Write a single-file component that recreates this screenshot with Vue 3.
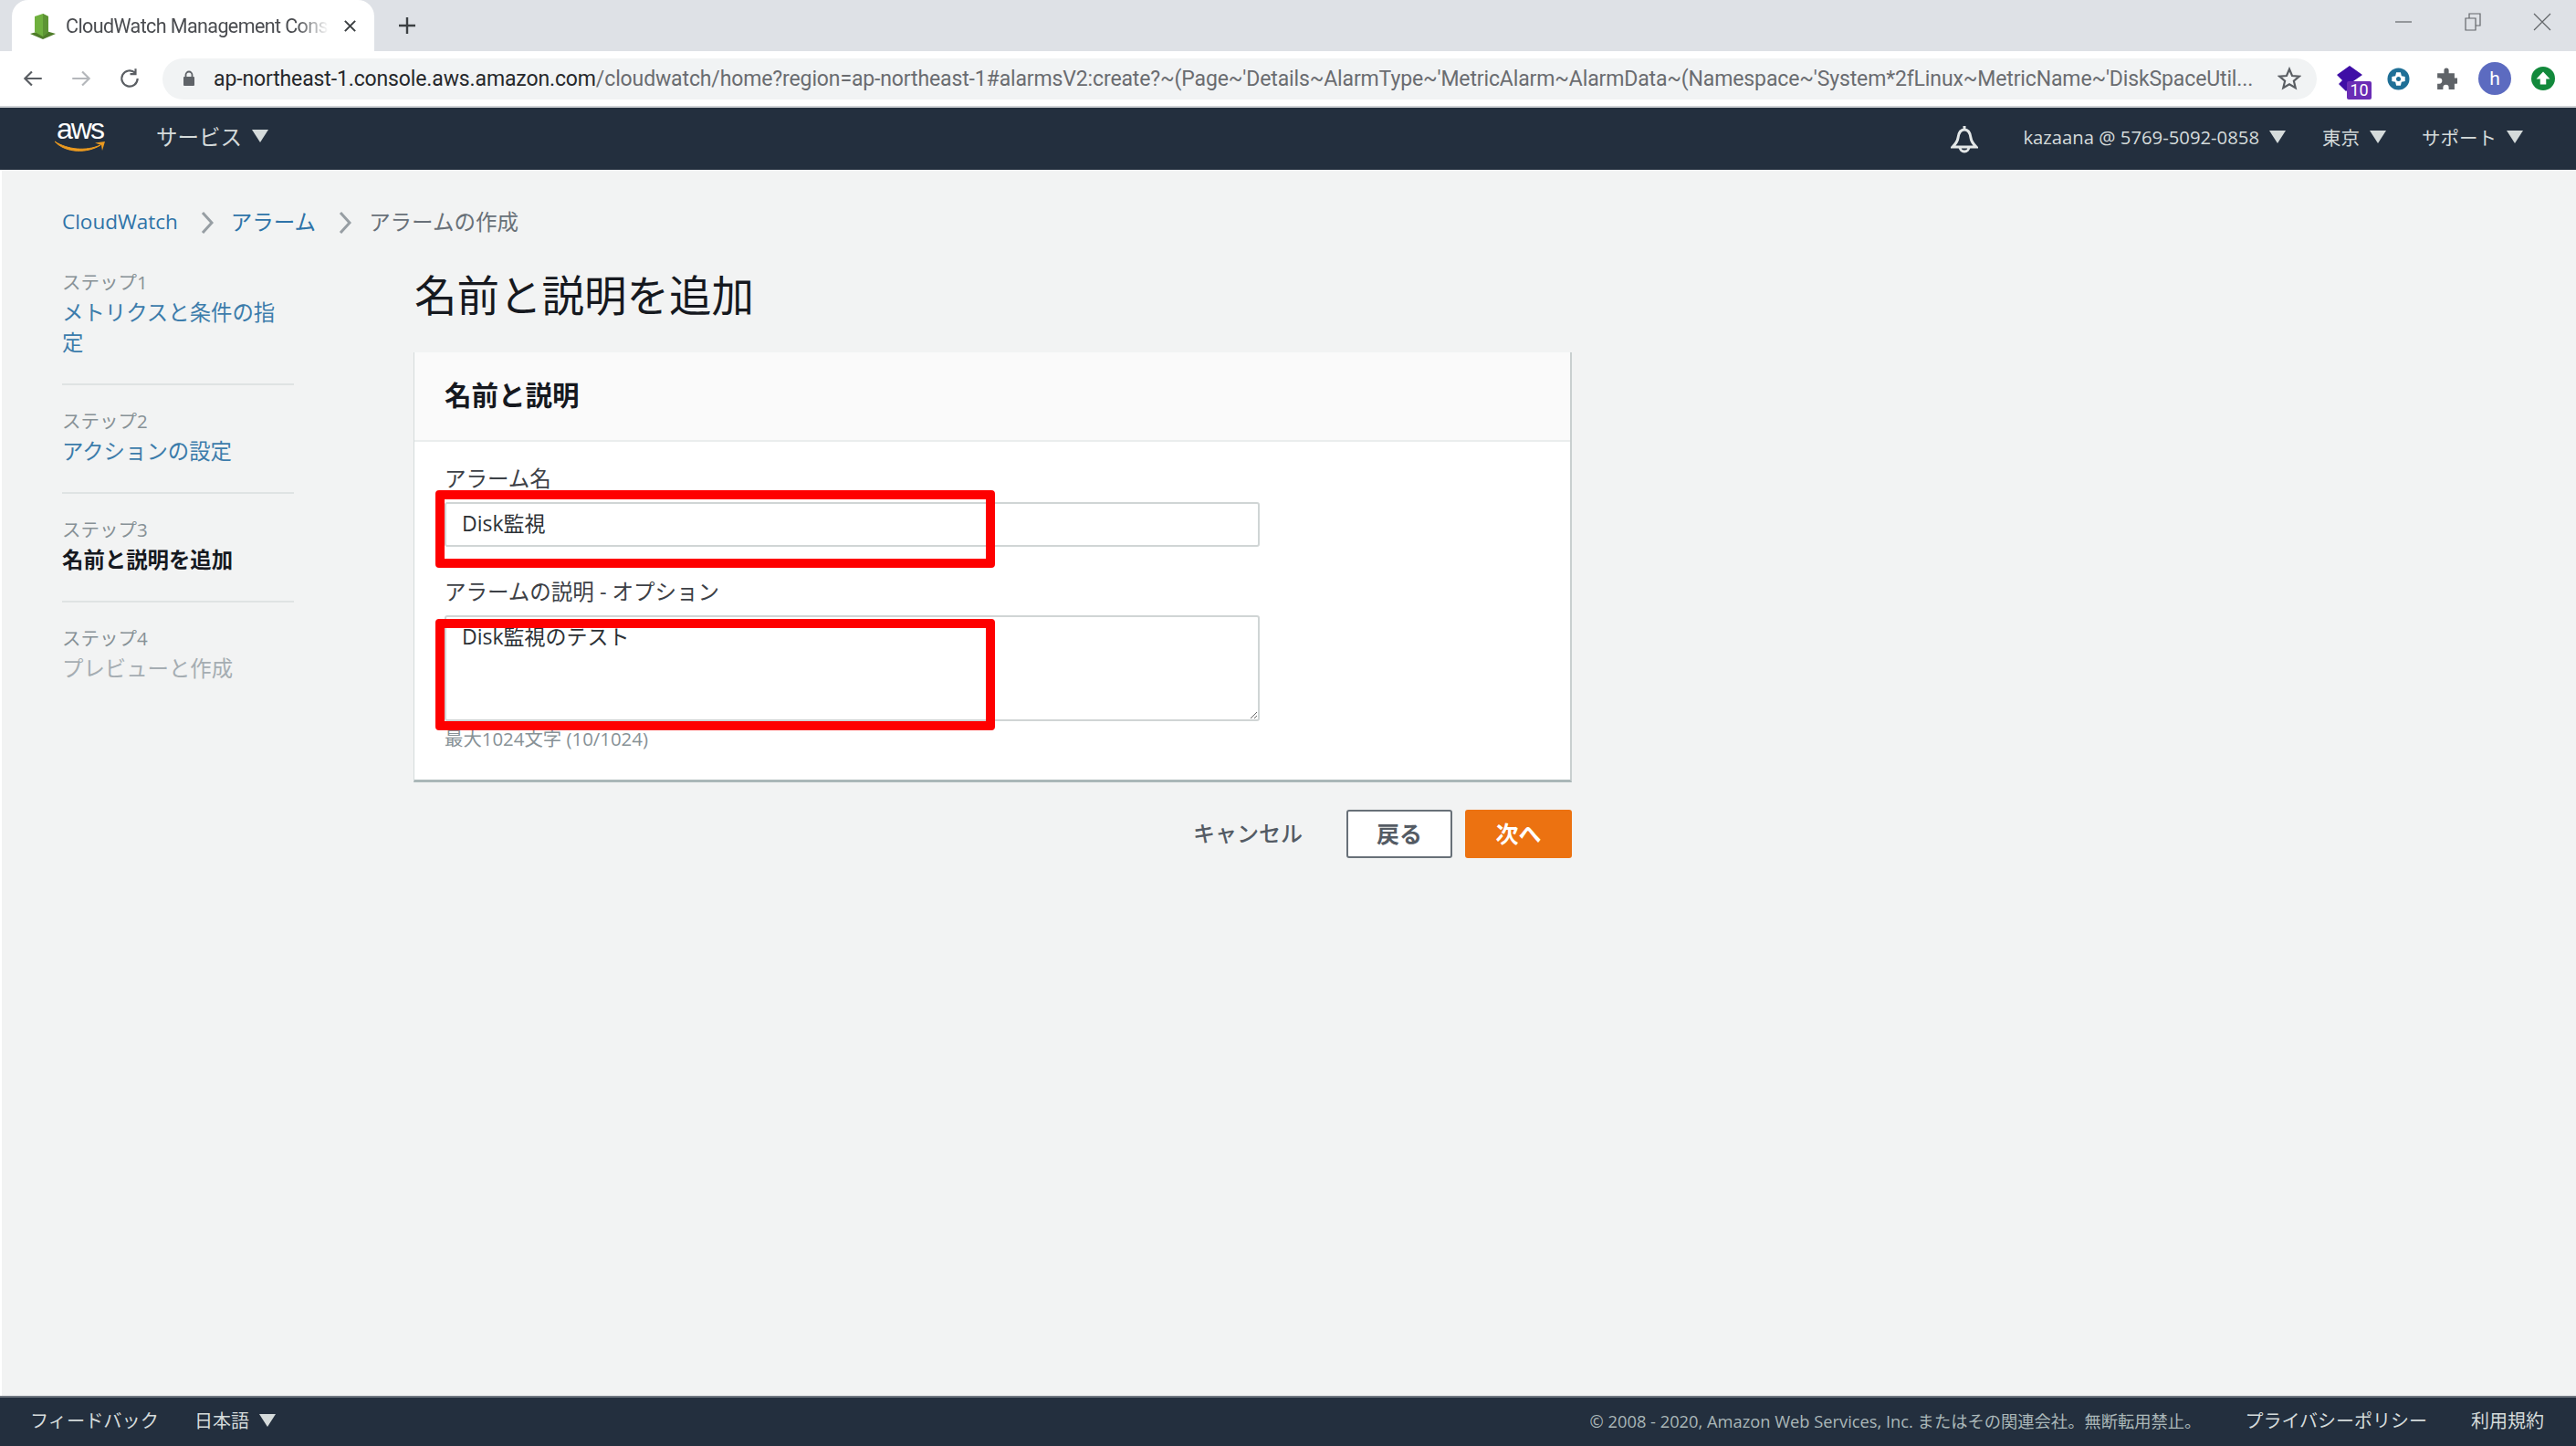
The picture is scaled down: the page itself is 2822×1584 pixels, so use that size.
<script setup>
const steps = [
  { label: 'ステップ1', text: 'メトリクスと条件の指定', kind: 'link' },
  { label: 'ステップ2', text: 'アクションの設定', kind: 'link' },
  { label: 'ステップ3', text: '名前と説明を追加', kind: 'current' },
  { label: 'ステップ4', text: 'プレビューと作成', kind: 'off' },
]
</script>

<template>
  <div class="page">
    <div class="tabstrip">
      <div class="tab">
        <svg class="favicon" viewBox="0 0 28 28">
          <path d="M0 22 L14 18 L28 22 L14 28 Z" fill="#4f7d2a" />
          <path d="M5 3 L14 0 L20 3 V20 L14 25 L5 20 Z" fill="#6fb03e" />
          <path d="M14 0 L20 3 V20 L14 25 Z" fill="#5d9434" />
        </svg>
        <span class="tab-title">CloudWatch Management Console</span>
        <svg class="tab-close" viewBox="0 0 16 16"><path d="M2 2 L14 14 M14 2 L2 14" /></svg>
      </div>
      <svg class="new-tab" viewBox="0 0 20 20"><path d="M10 1 V19 M1 10 H19" /></svg>
      <div class="win-controls">
        <svg viewBox="0 0 20 20"><path d="M1 10 H19" /></svg>
        <svg viewBox="0 0 20 20"><path d="M2 6 H13 V19 H2 Z M6 6 V1 H18 V14 H13" /></svg>
        <svg viewBox="0 0 20 20"><path d="M1 1 L19 19 M19 1 L1 19" /></svg>
      </div>
    </div>

    <div class="toolbar">
      <svg class="nav-ico" viewBox="0 0 24 24"><path d="M21 12 H4 M11 5 L4 12 L11 19" /></svg>
      <svg class="nav-ico dim" viewBox="0 0 24 24"><path d="M3 12 H20 M13 5 L20 12 L13 19" /></svg>
      <svg class="nav-ico" viewBox="0 0 24 24"><path d="M20 12 A8 8 0 1 1 17.5 6.2 M18 2 V7.5 H12.5" /></svg>
      <div class="address">
        <svg class="lock" viewBox="0 0 14 18"><path d="M3.5 8 V5 A3.5 3.5 0 0 1 10.500 5 V8" fill="none" stroke="#5f6368" stroke-width="1.800" /><rect x="1" y="7" width="12" height="10" rx="1" fill="#5f6368" /></svg>
        <span class="url"><b>ap-northeast-1.console.aws.amazon.com</b>/cloudwatch/home?region=ap-northeast-1#alarmsV2:create?~(Page~'Details~AlarmType~'MetricAlarm~AlarmData~(Namespace~'System*2fLinux~MetricName~'DiskSpaceUtil...</span>
        <svg class="star" viewBox="0 0 24 24"><path d="M12 2.500 L14.800 9.200 L22 9.800 L16.500 14.500 L18.200 21.500 L12 17.800 L5.800 21.500 L7.500 14.500 L2 9.800 L9.200 9.200 Z" /></svg>
      </div>
      <div class="extensions">
        <div class="ext ext-one">
          <svg viewBox="0 0 28 30"><path d="M14 0 L28 10 L18 17 L20 19 L10 28 L2 20 L6 16 L0 10 Z" fill="#3f0ea6" /></svg>
          <span class="ext-badge">10</span>
        </div>
        <svg class="ext ext-two" viewBox="0 0 26 26"><circle cx="13" cy="13" r="12.500" fill="#1f6f96" /><path d="M10.500 5.500 H15.500 L16.500 9.500 L20.500 10.500 V15.500 L16.500 16.500 L15.500 20.500 H10.500 L9.500 16.500 L5.500 15.500 V10.500 L9.500 9.500 Z" fill="#fff" /><circle cx="13" cy="13" r="2.600" fill="#1f6f96" /></svg>
        <svg class="ext ext-three" viewBox="0 0 24 24"><path d="M10 3 A2.500 2.500 0 0 1 15 3 V6 H21 V11 H23 A2.800 2.800 0 0 1 23 17 H21 V23 H15 V21 A2.800 2.800 0 0 0 9 21 V23 H3 V17 H5 A2.800 2.800 0 0 0 5 11 H3 V6 H10 Z" fill="#5f6368" /></svg>
        <span class="avatar">h</span>
        <svg class="ext ext-four" viewBox="0 0 28 28"><circle cx="14" cy="14" r="14" fill="#12893c" /><path d="M14 6 L22 14.500 H17.500 V21 H10.500 V14.500 H6 Z" fill="#fff" /></svg>
      </div>
    </div>

    <header class="awsnav">
      <div class="logo">
        <span class="logo-text">aws</span>
        <svg class="smile" viewBox="0 0 56 14"><path d="M0 1 C14 10 34 12 50 5 C36 14 12 14 0 1 Z" fill="#ec9a1f" stroke="#ec9a1f" stroke-width="1" /><path d="M44 2.500 L55 1 L52 11 L51 5 Z" fill="#ec9a1f" /></svg>
      </div>
      <span class="nav-item services">サービス<i class="tri"></i></span>
      <svg class="bell" viewBox="0 0 30 32"><path d="M15 1 V5 M15 5 C10 5 8.500 10 8 14 C7.500 18 5 21 2 24 H28 C25 21 22.500 18 22 14 C21.500 10 20 5 15 5 Z M10 24 A5 5 0 0 0 20 24" fill="none" stroke="#e3e7e7" stroke-width="3" /></svg>
      <span class="nav-item account">kazaana @ 5769-5092-0858<i class="tri"></i></span>
      <span class="nav-item region">東京<i class="tri"></i></span>
      <span class="nav-item support">サポート<i class="tri"></i></span>
    </header>

    <main class="main">
      <nav class="crumbs">
        <a class="crumb-link first">CloudWatch</a>
        <svg class="chev" viewBox="0 0 14 26"><path d="M2 2 L12 13 L2 24" /></svg>
        <a class="crumb-link">アラーム</a>
        <svg class="chev" viewBox="0 0 14 26"><path d="M2 2 L12 13 L2 24" /></svg>
        <span class="crumb-here">アラームの作成</span>
      </nav>

      <div class="body">
        <aside class="side">
          <div v-for="s in steps" :key="s.label" class="step">
            <div class="step-label">{{ s.label }}</div>
            <div class="step-text" :class="s.kind">{{ s.text }}</div>
          </div>
        </aside>

        <section class="content">
          <h1 class="title">名前と説明を追加</h1>
          <div class="card">
            <div class="card-head">名前と説明</div>
            <div class="card-body">
              <label class="field-label">アラーム名</label>
              <div class="field-wrap">
                <div class="input">Disk監視</div>
                <div class="mark mark-one"></div>
              </div>
              <label class="field-label second">アラームの説明 - オプション</label>
              <div class="field-wrap">
                <div class="textarea">Disk監視のテスト</div>
                <div class="mark mark-two"></div>
              </div>
              <div class="hint">最大1024文字 (10/1024)</div>
            </div>
          </div>
          <div class="actions">
            <span class="cancel">キャンセル</span>
            <span class="btn back">戻る</span>
            <span class="btn next">次へ</span>
          </div>
        </section>
      </div>
    </main>

    <footer class="footer">
      <span class="feedback">フィードバック</span>
      <span class="lang">日本語<i class="tri"></i></span>
      <span class="copy">© 2008 - 2020, Amazon Web Services, Inc. またはその関連会社。無断転用禁止。</span>
      <span class="privacy">プライバシーポリシー</span>
      <span class="terms">利用規約</span>
    </footer>
  </div>
</template>

<style>
html, body { margin: 0; padding: 0; background: #f2f3f3; }
</style>

<style scoped>
.page {
  width: 2822px;
  height: 1584px;
  display: flex;
  flex-direction: column;
  overflow: hidden;
  font-family: "Open Sans", "Noto Sans CJK JP", sans-serif;
  color: #16191f;
  background: #f2f3f3;
}

/* browser chrome */
.tabstrip {
  height: 56px;
  flex: none;
  display: flex;
  align-items: flex-end;
  background: #dee1e6;
  padding-left: 13px;
}
.tab {
  width: 397px;
  height: 56px;
  box-sizing: border-box;
  background: #fff;
  border-radius: 18px 18px 0 0;
  display: flex;
  align-items: center;
  padding: 0 18px 0 20px;
}
.favicon { width: 28px; height: 28px; flex: none; margin-top: 2px; }
.tab-title {
  margin-left: 11px;
  width: 288px;
  flex: none;
  overflow: hidden;
  white-space: nowrap;
  font-family: Roboto, sans-serif;
  font-size: 21.500px;
  letter-spacing: -0.6px;
  color: #4a4c50;
  -webkit-mask-image: linear-gradient(90deg, #000 88%, transparent 100%);
  mask-image: linear-gradient(90deg, #000 88%, transparent 100%);
}
.tab-close { width: 15px; height: 15px; margin-left: 16px; fill: none; stroke: #3c4043; stroke-width: 2.200; }
.new-tab { width: 20px; height: 20px; margin: 0 0 18px 26px; fill: none; stroke: #3c4043; stroke-width: 2.400; }
.win-controls {
  margin-left: auto;
  margin-right: 27px;
  align-self: flex-start;
  display: flex;
  gap: 56px;
  padding-top: 14px;
}
.win-controls svg { width: 20px; height: 20px; fill: none; stroke: #63666a; stroke-width: 1.200; }

.toolbar {
  height: 62px;
  box-sizing: border-box;
  flex: none;
  display: flex;
  align-items: center;
  background: #fff;
  border-bottom: 2px solid #d0d3d7;
  padding-left: 23px;
}
.nav-ico { width: 26px; height: 26px; margin-right: 27px; flex: none; fill: none; stroke: #5a5e63; stroke-width: 2; }
.nav-ico.dim { stroke: #b4b7bb; }
.address {
  width: 2360px;
  height: 45px;
  margin-left: -4px;
  flex: none;
  box-sizing: border-box;
  border-radius: 23px;
  background: #f1f3f4;
  display: flex;
  align-items: center;
  padding-left: 22px;
}
.lock { width: 14px; height: 18px; flex: none; }
.url {
  margin-left: 20px;
  width: 2235px;
  flex: none;
  white-space: nowrap;
  font-family: Roboto, sans-serif;
  font-size: 23px;
  letter-spacing: -0.13px;
  color: #6a6c70;
}
.url b { font-weight: 400; color: #26282b; }
.star { width: 26px; height: 26px; margin-left: 26px; flex: none; fill: none; stroke: #5a5e63; stroke-width: 2; }
.extensions { display: flex; align-items: center; margin-left: 22px; flex: none; }
.ext { flex: none; }
.ext-one { width: 38px; height: 46px; position: relative; margin-top: 2px; }
.ext-one svg { width: 28px; height: 30px; display: block; margin-top: 8px; }
.ext-badge {
  position: absolute;
  left: 11px;
  top: 25px;
  width: 27px;
  height: 20px;
  background: #6a2db5;
  color: #fff;
  border-radius: 2px;
  font-family: Roboto, sans-serif;
  font-size: 18px;
  line-height: 20px;
  text-align: center;
}
.ext-two { width: 25px; height: 25px; margin-left: 17px; }
.ext-three { width: 25px; height: 25px; margin-left: 27px; }
.avatar {
  width: 36px;
  height: 36px;
  margin-left: 23px;
  flex: none;
  border-radius: 50%;
  background: #5c6bc0;
  color: #fff;
  text-align: center;
  font-family: Roboto, sans-serif;
  font-size: 21px;
  line-height: 36px;
}
.ext-four { width: 26px; height: 26px; margin-left: 22px; }

/* AWS bar */
.awsnav {
  height: 68px;
  flex: none;
  display: flex;
  align-items: center;
  background: #232f3e;
  color: #d5dbdb;
  padding-left: 60px;
  font-size: 20.500px;
}
.logo { width: 56px; height: 44px; flex: none; position: relative; }
.logo-text {
  position: absolute;
  left: 2px;
  top: -11px;
  font-family: "Liberation Sans", sans-serif;
  font-size: 32px;
  letter-spacing: -2px;
  line-height: 44px;
  color: #fff;
}
.smile { position: absolute; left: 0; bottom: 6px; width: 56px; height: 14px; }
.nav-item { display: inline-flex; align-items: center; white-space: nowrap; padding-bottom: 4px; }
.tri {
  display: inline-block;
  width: 0;
  height: 0;
  border-left: 9px solid transparent;
  border-right: 9px solid transparent;
  border-top: 14px solid #d5dbdb;
  margin-left: 11px;
}
.services { margin-left: 55px; font-size: 23.500px; padding-bottom: 6px; }
.bell { width: 30px; height: 32px; margin-left: auto; margin-top: 2px; flex: none; }
.account { margin-left: 49px; font-size: 20.300px; }
.region { margin-left: 40px; }
.support { margin-left: 39px; margin-right: 58px; }

/* page */
.main {
  flex: 1;
  min-height: 0;
  box-sizing: border-box;
  padding: 40px 0 0 66px;
  border-left: 2px solid #fff;
}
.crumbs {
  display: flex;
  align-items: center;
  height: 34px;
  font-size: 23.500px;
  line-height: 34px;
}
.crumb-link { color: #2e73a8; }
.crumb-link.first { font-size: 22.500px; }
.crumb-here { color: #687078; }
.chev { width: 14px; height: 26px; margin: 2px 19px 0 25px; fill: none; stroke: #979ea3; stroke-width: 3; }
.body { display: flex; margin-top: 33px; }
.side { width: 254px; flex: none; margin-right: 131px; font-size: 23.400px; }
.step { padding: 23px 0 28px; border-bottom: 2px solid #dfe3e3; line-height: 33px; }
.step:first-child { padding-top: 0; }
.step:last-child { border-bottom: 0; }
.step-label { color: #879196; font-size: 20.500px; }
.step-text.link { color: #3c7cab; }
.step-text.current { color: #16191f; font-weight: 700; }
.step-text.off { color: #a5adb2; }

.content { width: 1269px; flex: none; }
.title { margin: 0; padding-left: 1px; font-size: 46.500px; font-weight: 400; line-height: 60px; color: #16191f; }
.card {
  margin-top: 33px;
  background: #fff;
  border-left: 1px solid #d5dbdb;
  border-right: 2px solid #c9cfcf;
  border-bottom: 3px solid #aab7b8;
  box-sizing: border-box;
}
.card-head {
  height: 98px;
  box-sizing: border-box;
  display: flex;
  align-items: center;
  padding-left: 33px;
  padding-bottom: 6px;
  background: #fafafa;
  border-bottom: 2px solid #eaeded;
  font-size: 29.500px;
  font-weight: 700;
}
.card-body { padding: 24px 0 31px 33px; }
.field-label { display: block; height: 34px; font-size: 23.500px; line-height: 32px; color: #3c4046; }
.field-label.second { margin-top: 33px; }
.field-wrap { position: relative; margin-top: 8px; width: 893px; }
.input, .textarea {
  width: 893px;
  box-sizing: border-box;
  background: #fff;
  border: 2px solid #d0d5d5;
  border-radius: 3px;
  padding-left: 17px;
  font-size: 23px;
  color: #2c3136;
}
.input { height: 49px; line-height: 42px; }
.textarea { height: 116px; line-height: 28px; padding-top: 7px; resize: vertical; overflow: auto; }
.mark {
  position: absolute;
  left: -10px;
  width: 613px;
  box-sizing: border-box;
  border: 10px solid #fe0000;
  border-radius: 4px;
  pointer-events: none;
}
.mark-one { top: -13px; height: 85px; }
.mark-two { top: 4px; height: 122px; }
.hint { margin-top: 5px; font-size: 20.400px; line-height: 28px; color: #879196; }

.actions { display: flex; align-items: center; justify-content: flex-end; margin-top: 30px; }
.cancel { font-size: 24px; color: #545b64; font-weight: 500; margin-right: 48px; padding-bottom: 4px; }
.btn {
  width: 116px;
  height: 53px;
  box-sizing: border-box;
  border-radius: 3px;
  display: flex;
  align-items: center;
  justify-content: center;
  padding-bottom: 3px;
  font-size: 25px;
  font-weight: 700;
}
.back { background: #fff; border: 2px solid #687078; color: #545b64; margin-right: 14px; }
.next { background: #ec7211; color: #fff; width: 117px; }

.footer {
  height: 55px;
  flex: none;
  box-sizing: border-box;
  display: flex;
  align-items: center;
  background: #232f3e;
  border-top: 2px solid #6f7780;
  padding: 0 0 4px 33px;
  color: #d5dbdb;
  font-size: 20.200px;
}
.lang { margin-left: 39px; font-size: 20px; display: inline-flex; align-items: center; }
.lang .tri { margin-left: 11px; }
.copy { margin-left: auto; font-size: 18.300px; color: #aab7b8; }
.privacy { margin-left: 48px; font-size: 20px; }
.terms { margin-left: 48px; margin-right: 35px; font-size: 20px; }
</style>
